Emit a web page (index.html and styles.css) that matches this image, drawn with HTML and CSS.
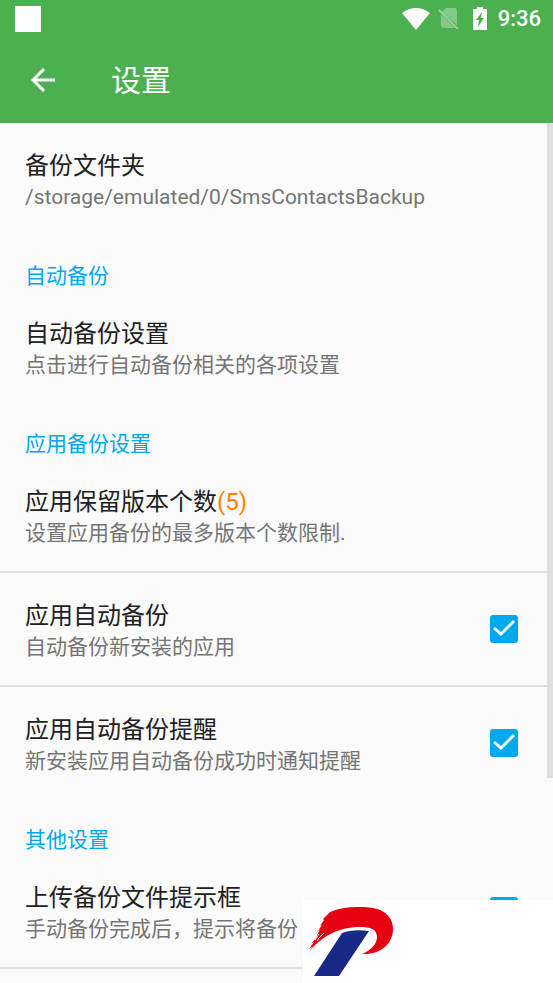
FILE: index.html
```html
<!DOCTYPE html>
<html lang="zh-CN">
<head>
<meta charset="utf-8">
<meta name="viewport" content="width=device-width, initial-scale=1">
<title>设置</title>
<link rel="stylesheet" href="styles.css">
</head>
<body>
<div class="app">
  <header class="top">
    <div class="status">
      <span class="notice"></span>
      <svg class="wifi" viewBox="0 0 28 22" aria-hidden="true"><path d="M0 5Q14-5 28 5L14 22Z" fill="#fff"/></svg>
      <svg class="sim" viewBox="0 0 22 24" aria-hidden="true"><path d="M8 1h9q2 0 2 2v15L4 5ZM3 7l14 14H5q-2 0-2-2Z" fill="#fff" opacity=".32"/><path d="M1 3l19 19" stroke="#fff" stroke-width="2" opacity=".42"/></svg>
      <svg class="battery" viewBox="0 0 14 23" aria-hidden="true"><path fill="#fff" fill-rule="evenodd" d="M4 0h6v2h4v21H0V2h4ZM9 5l-6 8h3l-1 7 6-9H8Z"/></svg>
      <time class="clock">9:36</time>
    </div>
    <div class="toolbar">
      <button class="back" type="button" aria-label="返回"><svg viewBox="0 0 24 24" aria-hidden="true"><path d="M24 12H2M13 1L2 12l11 11" fill="none" stroke="#fff" stroke-width="3"/></svg></button>
      <h1>设置</h1>
    </div>
  </header>
  <main class="settings">
    <div class="item"><div class="text"><div class="title">备份文件夹</div><div class="summary">/storage/emulated/0/SmsContactsBackup</div></div></div>
    <h2>自动备份</h2>
    <div class="item"><div class="text"><div class="title">自动备份设置</div><div class="summary">点击进行自动备份相关的各项设置</div></div></div>
    <h2>应用备份设置</h2>
    <div class="item divided"><div class="text"><div class="title">应用保留版本个数<span class="count">(5)</span></div><div class="summary">设置应用备份的最多版本个数限制.</div></div></div>
    <label class="item divided"><span class="text"><span class="title">应用自动备份</span><span class="summary">自动备份新安装的应用</span></span><input type="checkbox" checked></label>
    <label class="item"><span class="text"><span class="title">应用自动备份提醒</span><span class="summary">新安装应用自动备份成功时通知提醒</span></span><input type="checkbox" checked></label>
    <h2>其他设置</h2>
    <label class="item divided"><span class="text"><span class="title">上传备份文件提示框</span><span class="summary">手动备份完成后，提示将备份</span></span><input type="checkbox" checked></label>
    <div class="scrollbar"></div>
  </main>
  <div class="brand">
    <svg viewBox="0 0 98 83" aria-hidden="true">
      <path fill="#e60012" d="M6 52L10 46 6 49 11 42 8 44 13 38 17 29 14 32 19 25 17 26 21 20 20 19 27 12C36 8 46 7 57 7C66 7 72 8 77 10C86 14 90 21 90 29C90 44 77 55 59 54C68 50 74 44 74 37C74 29 67 27 57 27C35 27 18 37 6 52Z"/>
      <path fill="none" stroke="#fff" stroke-width="1" d="M12 40l4-6M14 41q2-4 7-8"/>
      <path fill="#182987" d="M39 33Q50 29 66 31L36 76H11Z"/>
    </svg>
  </div>
</div>
</body>
</html>
```
FILE: styles.css
```css
* {
  box-sizing: border-box;
}

body {
  margin: 0;
  background: #fafafa;
  color: #212121;
  font-family: Roboto, "Noto Sans CJK SC", sans-serif;
}

.app {
  position: relative;
  min-height: 100vh;
}

.top {
  background: #4caf50;
  color: #fff;
}

.status {
  display: flex;
  align-items: center;
  height: 37px;
  padding: 0 12px 0 15px;
}

.notice {
  width: 26px;
  height: 26px;
  margin-right: auto;
  background: #fff;
}

.wifi {
  width: 28px;
  height: 22px;
}

.sim {
  width: 22px;
  height: 24px;
  margin-left: 8px;
}

.battery {
  width: 14px;
  height: 23px;
  margin-left: 13px;
}

.clock {
  margin-left: 11px;
  font-size: 22px;
  font-weight: 500;
  line-height: 24px;
}

.toolbar {
  display: flex;
  align-items: center;
  gap: 56px;
  height: 86px;
  padding-left: 31px;
}

.back {
  width: 24px;
  height: 24px;
  padding: 0;
  border: 0;
  background: none;
}

.back svg {
  display: block;
}

h1 {
  margin: 0;
  padding-top: 2px;
  font-size: 30px;
  font-weight: 400;
  line-height: 40px;
}

.settings {
  position: relative;
}

.item {
  display: flex;
  align-items: center;
  justify-content: space-between;
  padding: 23px 35px 23px 25px;
}

.divided {
  border-bottom: 2px solid #dedede;
}

.text {
  padding-top: 4px;
}

.title,
.summary {
  display: block;
}

.title {
  font-size: 24px;
  line-height: 32px;
}

.summary {
  color: #757575;
  font-size: 21px;
  line-height: 30px;
}

.count {
  color: #ff8000;
}

h2 {
  margin: 0;
  padding: 26px 25px 0;
  color: #00a8ee;
  font-size: 21px;
  font-weight: 400;
  line-height: 30px;
}

input {
  appearance: none;
  flex: none;
  width: 28px;
  height: 28px;
  margin: 0;
  border-radius: 3px;
  background: #00a8ee;
}

input:checked::before {
  content: "";
  display: block;
  width: 28px;
  height: 28px;
  background: #fff;
  clip-path: polygon(3px 14px, 5px 12px, 11px 17px, 23px 5px, 25px 7px, 11px 21px);
}

.scrollbar {
  position: absolute;
  top: 0;
  right: 0;
  width: 6px;
  height: 655px;
  background: #dedede;
}

.brand {
  position: absolute;
  right: 0;
  bottom: 0;
  width: 250px;
  height: 83px;
  background: #fff;
}

.brand svg {
  display: block;
  width: 98px;
  height: 83px;
}
```
